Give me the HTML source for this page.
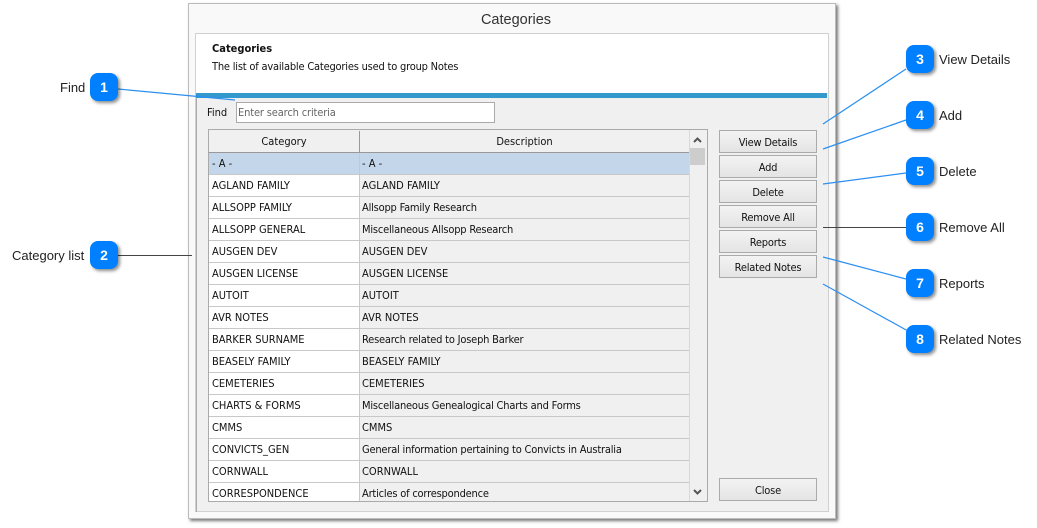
<!DOCTYPE html>
<html><head><meta charset="utf-8">
<style>
html,body{margin:0;padding:0;background:#fff}
#p{position:relative;width:1037px;height:528px;overflow:hidden;background:#fff;font-family:"DejaVu Sans Condensed","DejaVu Sans","Liberation Sans",sans-serif;font-stretch:condensed;font-size:11px;color:#111}
#p div{position:absolute;box-sizing:border-box;white-space:nowrap}
.win{left:188px;top:3px;width:648px;height:516px;background:#f9f9f9;border:1px solid #bbb;box-shadow:2px 2px 3px #777}
.btn{left:719px;width:98px;height:23px;border:1px solid #aaa;background:linear-gradient(#f3f3f3,#e4e4e4);text-align:center;line-height:23px;font-size:11px;letter-spacing:-.2px}
.c{left:208px;height:22px;line-height:22px;padding-left:3px;border-bottom:1px solid #c8c8c8}
.c1{width:151px;background:#fff;border-right:1px solid #c8c8c8}
.c2{left:360px;width:329px;background:#f0f0f0;padding-left:2px}
.m{letter-spacing:-.2px}
.b{width:28px;height:28px;border-radius:8px;background:#0080ff;color:#fff;font-family:"Liberation Sans",sans-serif;font-weight:bold;font-size:14px;text-align:center;line-height:28px;box-shadow:2px 2px 3px rgba(0,0,0,.45)}
.l{font-family:"Liberation Sans",sans-serif;font-stretch:normal;font-size:13px;line-height:16px;color:#222}
</style></head><body><div id="p">
<div class="win"></div>
<div style="left:188px;top:11px;width:656px;text-align:center;font-family:'Liberation Sans',sans-serif;font-stretch:normal;font-size:14.5px;line-height:18px;color:#333">Categories</div>
<div style="left:195px;top:33px;width:634px;height:479px;background:#f0f0f0;border:1px solid #d0d0d0"></div>
<div style="left:196px;top:34px;width:632px;height:59px;background:#fff"></div>
<div style="left:212px;top:42px;font-weight:bold;font-size:11px;line-height:14px">Categories</div>
<div class="m" style="left:212px;top:60px;font-size:11px;line-height:14px">The list of available Categories used to group Notes</div>
<div style="left:196px;top:93px;width:631px;height:5px;background:#3399cc"></div>
<div style="left:196px;top:98px;width:1px;height:414px;background:#aaa"></div>
<div style="left:207px;top:106px;line-height:14px">Find</div>
<div style="left:236px;top:102px;width:259px;height:21px;background:#fff;border:1px solid #aaa;padding-left:1px;line-height:20px;color:#666;letter-spacing:-.15px">Enter search criteria</div>

<div style="left:208px;top:129px;width:500px;height:373px;background:#f0f0f0;border:1px solid #aaa"></div>
<div style="left:209px;top:131px;width:480px;height:22px;background:#f0f0f0;border-bottom:1px solid #999"></div>
<div style="left:209px;top:131px;width:150px;text-align:center;line-height:22px">Category</div>
<div style="left:360px;top:131px;width:329px;text-align:center;line-height:22px">Description</div>
<div style="left:359px;top:131px;width:1px;height:21px;background:#999"></div>

<div style="left:209px;top:153px;width:480px;height:348px;overflow:hidden;background:#f0f0f0">
<div class="c" style="left:0;top:0;width:151px;background:#c4d7ea;border-bottom:1px solid #c8c8c8;border-right:1px solid #c8c8c8">- A -</div><div class="c" style="left:151px;top:0;width:329px;background:#c4d7ea;padding-left:2px">- A -</div>
<div class="c c1" style="left:0;top:22px">AGLAND FAMILY</div><div class="c c2" style="left:151px;top:22px">AGLAND FAMILY</div>
<div class="c c1" style="left:0;top:44px">ALLSOPP FAMILY</div><div class="c c2 m" style="left:151px;top:44px">Allsopp Family Research</div>
<div class="c c1" style="left:0;top:66px">ALLSOPP GENERAL</div><div class="c c2 m" style="left:151px;top:66px">Miscellaneous Allsopp Research</div>
<div class="c c1" style="left:0;top:88px">AUSGEN DEV</div><div class="c c2" style="left:151px;top:88px">AUSGEN DEV</div>
<div class="c c1" style="left:0;top:110px">AUSGEN LICENSE</div><div class="c c2" style="left:151px;top:110px">AUSGEN LICENSE</div>
<div class="c c1" style="left:0;top:132px">AUTOIT</div><div class="c c2" style="left:151px;top:132px">AUTOIT</div>
<div class="c c1" style="left:0;top:154px">AVR NOTES</div><div class="c c2" style="left:151px;top:154px">AVR NOTES</div>
<div class="c c1" style="left:0;top:176px">BARKER SURNAME</div><div class="c c2 m" style="left:151px;top:176px">Research related to Joseph Barker</div>
<div class="c c1" style="left:0;top:198px">BEASELY FAMILY</div><div class="c c2" style="left:151px;top:198px">BEASELY FAMILY</div>
<div class="c c1" style="left:0;top:220px">CEMETERIES</div><div class="c c2" style="left:151px;top:220px">CEMETERIES</div>
<div class="c c1" style="left:0;top:242px">CHARTS &amp; FORMS</div><div class="c c2 m" style="left:151px;top:242px">Miscellaneous Genealogical Charts and Forms</div>
<div class="c c1" style="left:0;top:264px">CMMS</div><div class="c c2" style="left:151px;top:264px">CMMS</div>
<div class="c c1" style="left:0;top:286px">CONVICTS_GEN</div><div class="c c2 m" style="left:151px;top:286px">General information pertaining to Convicts in Australia</div>
<div class="c c1" style="left:0;top:308px">CORNWALL</div><div class="c c2" style="left:151px;top:308px">CORNWALL</div>
<div class="c c1" style="left:0;top:330px">CORRESPONDENCE</div><div class="c c2 m" style="left:151px;top:330px">Articles of correspondence</div>
</div>

<div style="left:689px;top:130px;width:18px;height:371px;background:#f0f0f0;border-left:1px solid #d8d8d8"></div>
<div style="left:690px;top:148px;width:15px;height:17px;background:#cdcdcd"></div>
<svg style="position:absolute;left:0;top:0" width="1037" height="528">
<path d="M694 142l3.500-3.500 3.500 3.500" fill="none" stroke="#555" stroke-width="2"/>
<path d="M694 490l3.500 3.500 3.500-3.500" fill="none" stroke="#555" stroke-width="2"/>
<g fill="none" stroke-width="1.200" stroke="#2b8ff0">
<path d="M118 89L235 100"/>
<path d="M906 69L823 124"/>
<path d="M906 120L823 149"/>
<path d="M906 173L823 184"/>
<path d="M906 279L823 257"/>
<path d="M908 331L823 284"/>
</g>
<path d="M118 255.500H192" stroke="#444" stroke-width="1"/>
<path d="M823 227.500H906" stroke="#444" stroke-width="1"/>
</svg>

<div class="btn" style="top:130px">View Details</div>
<div class="btn" style="top:155px">Add</div>
<div class="btn" style="top:180px">Delete</div>
<div class="btn" style="top:205px">Remove All</div>
<div class="btn" style="top:230px">Reports</div>
<div class="btn" style="top:255px">Related Notes</div>
<div class="btn" style="top:478px">Close</div>

<div class="b" style="left:90px;top:73px">1</div>
<div class="b" style="left:90px;top:241px">2</div>
<div class="b" style="left:906px;top:45px">3</div>
<div class="b" style="left:906px;top:101px">4</div>
<div class="b" style="left:906px;top:157px">5</div>
<div class="b" style="left:906px;top:213px">6</div>
<div class="b" style="left:906px;top:269px">7</div>
<div class="b" style="left:906px;top:325px">8</div>

<div class="l" style="left:60px;top:80px">Find</div>
<div class="l" style="left:12px;top:248px">Category list</div>
<div class="l" style="left:939px;top:52px">View Details</div>
<div class="l" style="left:939px;top:108px">Add</div>
<div class="l" style="left:939px;top:164px">Delete</div>
<div class="l" style="left:939px;top:220px">Remove All</div>
<div class="l" style="left:939px;top:276px">Reports</div>
<div class="l" style="left:939px;top:332px">Related Notes</div>
</div></body></html>
